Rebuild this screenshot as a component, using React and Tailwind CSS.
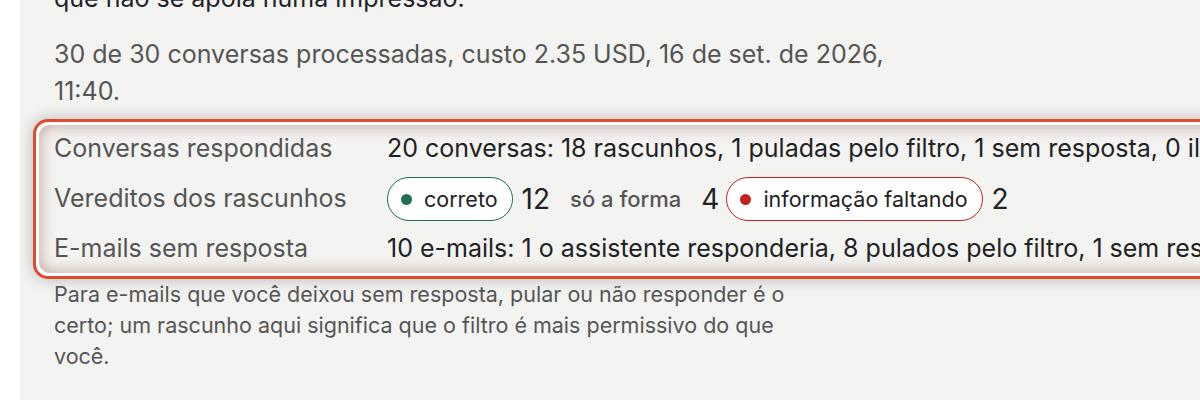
const ROWS = [
  { label: "Conversas respondidas", value: "20 conversas: 18 rascunhos, 1 puladas pelo filtro, 1 sem resposta, 0 ilegíveis", h: "h-[44px]" },
  { label: "Vereditos dos rascunhos", verdicts: true, h: "h-[56px]" },
  { label: "E-mails sem resposta", value: "10 e-mails: 1 o assistente responderia, 8 pulados pelo filtro, 1 sem resposta", h: "h-[44px]" },
]

function Pill({ tone, children }) {
  const ring = tone === "green" ? "border-[#1f6e4f]" : "border-[#b8271e]"
  const dot = tone === "green" ? "bg-[#1b7151]" : "bg-[#c1261c]"
  return (
    <span className={`inline-flex items-center gap-[12px] h-[44px] pl-[13px] pr-[14px] rounded-full border-[1.5px] bg-white ${ring}`}>
      <span className={`w-[11px] h-[11px] rounded-full ${dot}`} />
      <span className="text-[21.5px] text-[#222]">{children}</span>
    </span>
  )
}

function Verdicts() {
  return (
    <div className="flex items-center">
      <Pill tone="green">correto</Pill>
      <span className="ml-[9px] text-[28px] text-[#222]">12</span>
      <span className="ml-[20px] text-[22px] font-medium text-[#555]">só a forma</span>
      <span className="ml-[20px] text-[28px] text-[#222]">4</span>
      <span className="ml-[7px]"><Pill tone="red">informação faltando</Pill></span>
      <span className="ml-[9px] text-[28px] text-[#222]">2</span>
    </div>
  )
}

export default function App() {
  return (
    <div className="flex w-[1200px] h-[400px] overflow-hidden bg-white" style={{ fontFamily: "Inter, 'Noto Sans', sans-serif" }}>
      <div className="w-[20px] shrink-0 bg-white" />
      <main className="flex-1 min-w-0 bg-[#f3f3f2] pl-[34px]">
        <p className="-mt-[20px] text-[25px] leading-[37px] text-[#1f2328] whitespace-nowrap">que não se apoia numa impressão.</p>
        <p className="mt-[19px] w-[880px] text-[25px] leading-[37px] text-[#555]">
          30 de 30 conversas processadas, custo 2.35 USD, 16 de set. de 2026, 11:40.
        </p>

        {/* highlighted stats block */}
        <div className="mt-[9px] -ml-[21px] w-[1260px] rounded-[15px] border-[3px] border-[#dc4a2f] bg-white p-[3px] shadow-[0_0_16px_rgba(0,0,0,0.25)]">
          <div className="rounded-[11px] bg-[#f3f3f2] pl-[15px] py-[2px] shadow-[inset_0_0_16px_rgba(120,60,40,0.45)]">
            {ROWS.map(row => (
              <div key={row.label} className={`flex items-center ${row.h}`}>
                <span className="w-[333px] shrink-0 text-[25px] text-[#555]">{row.label}</span>
                {row.verdicts ? <Verdicts /> : (
                  <span className="text-[25px] text-[#222] whitespace-nowrap">{row.value}</span>
                )}
              </div>
            ))}
          </div>
        </div>

        <p className="mt-[0px] w-[780px] text-[21.5px] leading-[31px] text-[#555]">
          Para e-mails que você deixou sem resposta, pular ou não responder é o certo; um rascunho aqui significa que o filtro é mais permissivo do que você.
        </p>
      </main>
    </div>
  )
}
